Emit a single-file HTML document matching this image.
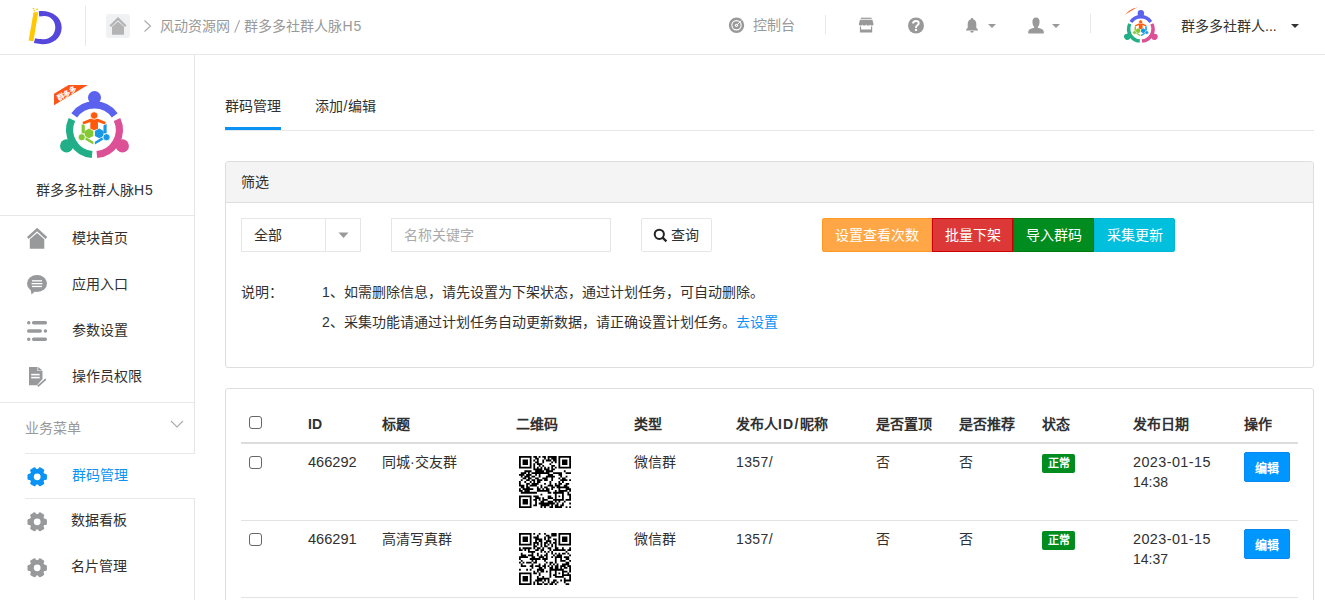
<!DOCTYPE html>
<html lang="zh-CN"><head><meta charset="utf-8">
<style>
*{box-sizing:border-box;margin:0;padding:0}
html,body{width:1325px;height:600px;overflow:hidden;background:#fff}
body{font-family:"Liberation Sans",sans-serif;font-size:14px;color:#303030;position:relative}
.a{position:absolute;white-space:nowrap}
.t{line-height:14px}
.hl{position:absolute;background:#e8e8e8}
svg{display:block}
</style></head><body>

<!-- HEADER -->
<div class="a" style="left:0;top:0;width:1325px;height:54px;background:#fff"></div>
<div class="hl" style="left:0;top:54px;width:1325px;height:1px;background:#e6e7eb"></div>
<svg class="a" style="left:20px;top:4px" width="50" height="46" viewBox="20 4 50 46">
  <path d="M33.6 12.2 L38.2 12.2 L33.4 41.2 L28.6 40.6 Z" fill="#ffc800"/>
  <circle cx="33.5" cy="8.6" r="0.9" fill="#ffc800"/><circle cx="37" cy="9.3" r="0.9" fill="#ffc800"/><circle cx="34.3" cy="10.8" r="0.8" fill="#ffc800"/>
  <path d="M38.8 11.2 C50.5 9.8 61.7 16.5 61.7 27.5 C61.7 38.5 52 44.6 42 44.3 L33.9 43 L35.1 38.3 C38 39 41.5 39.3 44 39.2 C50.5 39 55.3 34 55.3 27.5 C55.3 20.5 50.2 15.9 44.5 15.9 C42.5 15.9 40.7 16.1 39.2 16.4 Z" fill="#5546dc"/>
</svg>
<div class="hl" style="left:85px;top:6px;width:1px;height:40px"></div>
<div class="a" style="left:106px;top:14px;width:24px;height:24px;background:#f0f1f3;border-radius:3px"></div>
<svg class="a" style="left:106px;top:14px" width="24" height="24" viewBox="0 0 24 24">
  <path d="M4.2 12.2 L12 4.6 L19.8 12.2" fill="none" stroke="#b4b4b4" stroke-width="2.2"/>
  <path d="M6 12.8 L12 7.4 L18 12.8 V20.7 H6 Z" fill="#b4b4b4"/>
</svg>
<svg class="a" style="left:140px;top:16px" width="16" height="20" viewBox="0 0 16 20">
  <path d="M4.5 4.5 L10.5 10 L4.5 15.5" fill="none" stroke="#aaa" stroke-width="1.1"/>
</svg>
<div class="a t" style="left:160px;top:19px;color:#999">风动资源网</div>
<svg class="a" style="left:233px;top:19px" width="8" height="15" viewBox="0 0 8 15"><path d="M6.6 1.2 L1.6 13.6" stroke="#a5a5a5" stroke-width="1.1"/></svg>
<div class="a t" style="left:244px;top:19px;color:#999">群多多社群人脉<span style="letter-spacing:1px;margin-left:0.5px">H5</span></div>

<svg class="a" style="left:728px;top:17px" width="18" height="18" viewBox="0 0 18 18">
  <circle cx="8.5" cy="8.3" r="6.45" fill="none" stroke="#999" stroke-width="2.5"/>
  <circle cx="8.5" cy="8.3" r="4.05" fill="#999"/>
  <circle cx="8.5" cy="8.3" r="1.6" fill="#fff"/>
  <circle cx="8.5" cy="8.3" r="0.6" fill="#999"/>
  <path d="M9.3 7.5 L13.2 3.6" stroke="#fff" stroke-width="1"/>
</svg>
<div class="a t" style="left:753px;top:18px;color:#999">控制台</div>
<div class="hl" style="left:825px;top:15px;width:1px;height:19px"></div>

<svg class="a" style="left:858px;top:17px" width="16" height="16" viewBox="0 0 16 16">
  <rect x="2.8" y="0.7" width="10.8" height="1.2" fill="#999"/>
  <path d="M2 2.8 H14.4 L15.6 7.2 Q15.6 8.6 14 8.6 Q12.4 8.6 12.2 7.4 Q11.9 8.6 10.3 8.6 Q8.6 8.6 8.2 7.4 Q7.8 8.6 6.1 8.6 Q4.5 8.6 4.2 7.4 Q4 8.6 2.4 8.6 Q0.8 8.6 0.8 7.2 Z" fill="#999"/>
  <path d="M1.9 9.6 V15.6 H14.2 V9.6 H13 V12.6 H3.1 V9.6 Z" fill="#999"/>
</svg>
<svg class="a" style="left:908px;top:17px" width="16" height="17" viewBox="0 0 16 17">
  <circle cx="8" cy="8.5" r="8" fill="#999"/>
  <path d="M5.1 6.5 Q5.1 3.9 8 3.9 Q10.7 3.9 10.7 6.2 Q10.7 7.6 9.1 8.5 Q8 9.2 8 10.9" fill="none" stroke="#fff" stroke-width="2"/>
  <rect x="6.9" y="11.9" width="2.2" height="2" fill="#fff"/>
</svg>
<svg class="a" style="left:965px;top:17px" width="14" height="17" viewBox="0 0 14 17">
  <path d="M7 1 Q8.2 1 8.3 2.2 Q11.3 3.2 11.3 7.2 V10.8 L13 12.8 V13.5 H1 V12.8 L2.7 10.8 V7.2 Q2.7 3.2 5.7 2.2 Q5.8 1 7 1 Z" fill="#999"/>
  <path d="M5.2 14 H8.8 Q8.6 15.8 7 15.8 Q5.4 15.8 5.2 14 Z" fill="#999"/>
</svg>
<svg class="a" style="left:987px;top:23px" width="10" height="6" viewBox="0 0 10 6"><path d="M1 1 H9 L5 5 Z" fill="#999"/></svg>
<svg class="a" style="left:1028px;top:17px" width="16" height="17" viewBox="0 0 16 17">
  <path d="M8 0.5 Q11.6 0.5 11.6 5 Q11.6 8.2 9.8 10 V10.8 Q15.8 11.8 15.8 15 V16.5 H0.2 V15 Q0.2 11.8 6.2 10.8 V10 Q4.4 8.2 4.4 5 Q4.4 0.5 8 0.5 Z" fill="#999"/>
</svg>
<svg class="a" style="left:1051px;top:23px" width="10" height="6" viewBox="0 0 10 6"><path d="M1 1 H9 L5 5 Z" fill="#999"/></svg>
<div class="hl" style="left:1090px;top:14px;width:1px;height:19px"></div>

<div class="a" style="left:1121px;top:7px;width:40px;height:40px;border-radius:50%;overflow:hidden">
<svg width="40" height="40" viewBox="0 0 80 80"><use href="#logo"/></svg>
</div>
<div class="a t" style="left:1181px;top:19px;color:#333">群多多社群人...</div>
<svg class="a" style="left:1290px;top:23px" width="10" height="6" viewBox="0 0 10 6"><path d="M1 1 H9 L5 5 Z" fill="#333"/></svg>

<!-- SIDEBAR -->
<div class="hl" style="left:194px;top:55px;width:1px;height:399px;background:#e6e6e6"></div>
<div class="hl" style="left:194px;top:498px;width:1px;height:102px;background:#e6e6e6"></div>
<svg class="a" style="left:54.3px;top:85.4px" width="81.6" height="81.6" viewBox="0 0 80 80">
 <defs>
  <g id="logo">
<path d="M19.85 29.79 A24.35 24.35 0 0 1 59.55 29.79" fill="none" stroke="#5a62ee" stroke-width="7"/>
<path d="M61.84 33.76 A24.35 24.35 0 0 1 41.99 68.14" fill="none" stroke="#dc5096" stroke-width="7"/>
<path d="M37.41 68.14 A24.35 24.35 0 0 1 17.56 33.76" fill="none" stroke="#22ae86" stroke-width="7"/>
<path d="M33.74 18.08 Q36.36 14.59 35.25 12.21 L44.15 12.21 Q43.04 14.59 45.66 18.08 Z" fill="#5a62ee"/>
<circle cx="39.70" cy="12.30" r="6.4" fill="#5a62ee"/>
<path d="M65.04 51.65 Q66.75 55.66 69.37 55.89 L64.92 63.60 Q63.41 61.45 59.08 61.97 Z" fill="#dc5096"/>
<circle cx="67.07" cy="59.70" r="6.4" fill="#dc5096"/>
<path d="M20.32 61.97 Q15.99 61.45 14.48 63.60 L10.03 55.89 Q12.65 55.66 14.36 51.65 Z" fill="#22ae86"/>
<circle cx="12.33" cy="59.70" r="6.4" fill="#22ae86"/>
<path d="M35.6 33.2 L43.1 33.2 L50.9 36.3 L49.8 38.8 L43.1 36.2 L43.1 42.8 L39.35 44.4 L35.6 42.8 L35.6 36.2 L28.9 38.8 L27.8 36.3 Z" fill="#ff5a0a"/>
<circle cx="39.35" cy="29.9" r="3.7" fill="#ff5a0a" stroke="#fff" stroke-width="0.8"/>
<path d="M27.1 38.3 L30.2 39.6 L30.2 47.5 L27.1 47.5 Z" fill="#84c934"/>
<path d="M34.3 42.7 L38.6 45.1 L38.6 49.9 L34.3 52.3 L30.1 49.9 L30.1 45.1 Z" fill="#84c934"/>
<path d="M31.5 51.3 L38.6 55.6 L38.6 58.4 L30.3 53.4 Z" fill="#84c934"/>
<circle cx="27.2" cy="51.2" r="3.5" fill="#84c934" stroke="#fff" stroke-width="0.8"/>
<path d="M51.6 38.3 L48.5 39.6 L48.5 47.5 L51.6 47.5 Z" fill="#1a98e4"/>
<path d="M44.4 42.7 L40.1 45.1 L40.1 49.9 L44.4 52.3 L48.6 49.9 L48.6 45.1 Z" fill="#1a98e4"/>
<path d="M47.2 51.3 L40.1 55.6 L40.1 58.4 L48.4 53.4 Z" fill="#1a98e4"/>
<circle cx="51.5" cy="51.2" r="3.5" fill="#1a98e4" stroke="#fff" stroke-width="0.8"/>
<path d="M0 8.6 L14.3 0 L33.2 0 L0 19.9 Z" fill="#ff5514"/>
<text x="0" y="0" transform="translate(13.5 10.6) rotate(-31)" font-size="7.2" font-weight="bold" fill="#fff" text-anchor="middle" font-family="Liberation Sans">群多多</text>
  </g>
 </defs>
 <use href="#logo"/>
</svg>
<div class="a t" style="left:36px;top:183px;color:#333">群多多社群人脉<span style="letter-spacing:0.8px">H5</span></div>
<div class="hl" style="left:0;top:215px;width:194px;height:1px"></div>

<!-- menu icons -->
<svg class="a" style="left:27px;top:228px" width="21" height="22" viewBox="0 0 21 22">
  <path d="M0.8 10 L10.1 1.6 L19.4 10" fill="none" stroke="#98999b" stroke-width="2.6"/>
  <path d="M2.8 11.2 L10.1 5 L17.3 11.2 V20.7 H2.8 Z" fill="#98999b"/>
</svg>
<div class="a t" style="left:72px;top:231px">模块首页</div>
<svg class="a" style="left:26px;top:274px" width="22" height="22" viewBox="0 0 22 22">
  <ellipse cx="11" cy="9.5" rx="10" ry="8.5" fill="#98999b"/>
  <path d="M4.5 15 L5.5 20.5 L10 16.5 Z" fill="#98999b"/>
  <rect x="6" y="6.2" width="10" height="1.3" fill="#fff"/><rect x="5.6" y="9" width="10.8" height="1.3" fill="#fff"/><rect x="6" y="11.8" width="10" height="1.3" fill="#fff"/>
</svg>
<div class="a t" style="left:72px;top:277px">应用入口</div>
<svg class="a" style="left:26px;top:319px" width="22" height="22" viewBox="0 0 22 22">
  <g fill="none" stroke="#98999b" stroke-width="3.4" stroke-linecap="round">
   <path d="M2.7 3.7 h0.1 M7.6 3.7 H19.4 M2.7 12 H14.3 M19.4 12 h0.1 M2.7 20.2 h0.1 M7.6 20.2 H19.4"/>
  </g>
</svg>
<div class="a t" style="left:72px;top:323px">参数设置</div>
<svg class="a" style="left:26px;top:365px" width="22" height="23" viewBox="0 0 22 23">
  <path d="M3 2 H11.5 V6 H16.5 V14 L11 20.2 H3 Z" fill="#98999b"/>
  <path d="M12.2 2 L16.5 5.5 H12.2 Z" fill="#98999b"/>
  <rect x="5.2" y="8.8" width="8.5" height="1.6" fill="#fff"/><rect x="5.2" y="11.8" width="8.5" height="1.6" fill="#fff"/>
  <path d="M11.8 21.4 L19.8 14.2" stroke="#98999b" stroke-width="1.8"/>
</svg>
<div class="a t" style="left:72px;top:369px">操作员权限</div>

<div class="hl" style="left:0;top:402px;width:194px;height:1px"></div>
<div class="a t" style="left:25px;top:421px;color:#999">业务菜单</div>
<svg class="a" style="left:170px;top:419px" width="14" height="10" viewBox="0 0 14 10"><path d="M1 2 L7 8 L13 2" fill="none" stroke="#aaa" stroke-width="1.1"/></svg>
<div class="hl" style="left:25px;top:453px;width:169px;height:1px"></div>

<svg width="0" height="0" style="position:absolute">
 <defs>
  <path id="gear" d="M10 0.6 L14.6 0.6 L16.8 4.6 L20.6 4.6 L21.8 9.6 L19.6 12.8 L21.8 16 L19.2 20 L15.4 19.6 L13 23.4 L8.4 23.4 L6.2 19.6 L2.4 19.6 L0.2 15.2 L2.4 12 L0.2 8.4 L3 4.4 L6.8 4.6 Z"/>
 </defs>
</svg>
<svg class="a" style="left:27px;top:467px" width="21" height="21" viewBox="0 0 21 21" id="g1">
  <g transform="translate(10.2 9.8)" fill="#0a92f5"><circle r="7.8"/><rect x="-3.1" y="-9.7" width="6.2" height="6" rx="1.5" transform="rotate(30)"/><rect x="-3.1" y="-9.7" width="6.2" height="6" rx="1.5" transform="rotate(90)"/><rect x="-3.1" y="-9.7" width="6.2" height="6" rx="1.5" transform="rotate(150)"/><rect x="-3.1" y="-9.7" width="6.2" height="6" rx="1.5" transform="rotate(210)"/><rect x="-3.1" y="-9.7" width="6.2" height="6" rx="1.5" transform="rotate(270)"/><rect x="-3.1" y="-9.7" width="6.2" height="6" rx="1.5" transform="rotate(330)"/></g>
  <circle cx="10.2" cy="9.8" r="3.4" fill="#fff"/>
</svg>
<div class="a t" style="left:72px;top:468px;color:#0a92f5">群码管理</div>
<div class="hl" style="left:25px;top:498px;width:169px;height:1px"></div>
<svg class="a" style="left:27px;top:512px" width="21" height="21" viewBox="0 0 21 21">
  <g transform="translate(10.2 9.8)" fill="#98999b"><circle r="7.8"/><rect x="-3.1" y="-9.7" width="6.2" height="6" rx="1.5" transform="rotate(30)"/><rect x="-3.1" y="-9.7" width="6.2" height="6" rx="1.5" transform="rotate(90)"/><rect x="-3.1" y="-9.7" width="6.2" height="6" rx="1.5" transform="rotate(150)"/><rect x="-3.1" y="-9.7" width="6.2" height="6" rx="1.5" transform="rotate(210)"/><rect x="-3.1" y="-9.7" width="6.2" height="6" rx="1.5" transform="rotate(270)"/><rect x="-3.1" y="-9.7" width="6.2" height="6" rx="1.5" transform="rotate(330)"/></g>
  <circle cx="10.2" cy="9.8" r="3.4" fill="#fff"/>
</svg>
<div class="a t" style="left:71px;top:513px">数据看板</div>
<svg class="a" style="left:27px;top:558px" width="21" height="21" viewBox="0 0 21 21">
  <g transform="translate(10.2 9.8)" fill="#98999b"><circle r="7.8"/><rect x="-3.1" y="-9.7" width="6.2" height="6" rx="1.5" transform="rotate(30)"/><rect x="-3.1" y="-9.7" width="6.2" height="6" rx="1.5" transform="rotate(90)"/><rect x="-3.1" y="-9.7" width="6.2" height="6" rx="1.5" transform="rotate(150)"/><rect x="-3.1" y="-9.7" width="6.2" height="6" rx="1.5" transform="rotate(210)"/><rect x="-3.1" y="-9.7" width="6.2" height="6" rx="1.5" transform="rotate(270)"/><rect x="-3.1" y="-9.7" width="6.2" height="6" rx="1.5" transform="rotate(330)"/></g>
  <circle cx="10.2" cy="9.8" r="3.4" fill="#fff"/>
</svg>
<div class="a t" style="left:71px;top:559px">名片管理</div>

<!-- MAIN -->
<div class="a t" style="left:225px;top:99px">群码管理</div>
<div class="a t" style="left:315px;top:99px">添加<span style="letter-spacing:1px;margin-left:0.5px">/</span>编辑</div>
<div class="hl" style="left:225px;top:130px;width:1089px;height:1px;background:#e6e7eb"></div>
<div class="a" style="left:225px;top:127px;width:56px;height:3px;background:#0a92f5"></div>

<!-- panel 1 -->
<div class="a" style="left:225px;top:161px;width:1089px;height:207px;border:1px solid #dedede;border-radius:3px;overflow:hidden">
  <div style="height:41px;background:#f4f4f4;border-bottom:1px solid #dedede"></div>
</div>
<div class="a t" style="left:241px;top:175px">筛选</div>

<div class="a" style="left:241px;top:218px;width:120px;height:34px;border:1px solid #e6e6e6"></div>
<div class="a" style="left:325px;top:218px;width:1px;height:34px;background:#e6e6e6"></div>
<div class="a t" style="left:254px;top:228px">全部</div>
<svg class="a" style="left:338px;top:232px" width="11" height="7" viewBox="0 0 11 7"><path d="M0.5 0.5 H10.5 L5.5 6 Z" fill="#999"/></svg>

<div class="a" style="left:391px;top:218px;width:220px;height:34px;border:1px solid #e6e6e6"></div>
<div class="a t" style="left:404px;top:228px;color:#aaa">名称关键字</div>

<div class="a" style="left:641px;top:218px;width:71px;height:34px;border:1px solid #e6e6e6;border-radius:2px"></div>
<svg class="a" style="left:653px;top:228px" width="15" height="15" viewBox="0 0 15 15">
  <circle cx="6.3" cy="6.3" r="4.6" fill="none" stroke="#222" stroke-width="2"/>
  <path d="M9.6 9.6 L13.4 13.4" stroke="#222" stroke-width="2.2"/>
</svg>
<div class="a t" style="left:671px;top:228px">查询</div>

<div class="a" style="left:822px;top:218px;width:110px;height:34px;background:#ffa646;border:1px solid #ff9a22;border-radius:2px 0 0 2px"></div>
<div class="a t" style="left:835px;top:228px;color:#fff">设置查看次数</div>
<div class="a" style="left:932px;top:218px;width:81px;height:34px;background:#dd3838;border:1px solid #cc0000"></div>
<div class="a t" style="left:945px;top:228px;color:#fff">批量下架</div>
<div class="a" style="left:1013px;top:218px;width:81px;height:34px;background:#008c1e;border:1px solid #007a10"></div>
<div class="a t" style="left:1026px;top:228px;color:#fff">导入群码</div>
<div class="a" style="left:1094px;top:218px;width:81px;height:34px;background:#00c0de;border:1px solid #00b6d6;border-radius:0 2px 2px 0"></div>
<div class="a t" style="left:1107px;top:228px;color:#fff">采集更新</div>

<div class="a t" style="left:241px;top:285px">说明：</div>
<div class="a t" style="left:322px;top:285px">1、如需删除信息，请先设置为下架状态，通过计划任务，可自动删除。</div>
<div class="a t" style="left:322px;top:315px">2、采集功能请通过计划任务自动更新数据，请正确设置计划任务。<span style="color:#0a92f5">去设置</span></div>

<!-- panel 2 -->
<div class="a" style="left:225px;top:388px;width:1089px;height:260px;border:1px solid #dedede;border-radius:3px"></div>
<div class="hl" style="left:241px;top:442px;width:1057px;height:2px;background:#dcdcdc"></div>
<div class="hl" style="left:241px;top:520px;width:1057px;height:1px;background:#e3e3e3"></div>
<div class="hl" style="left:241px;top:597px;width:1057px;height:1px;background:#e3e3e3"></div>

<div class="a" style="left:249px;top:416px;width:13px;height:13px;border:1px solid #666;border-radius:3px"></div>
<div class="a t" style="left:308px;top:417px;font-weight:bold">ID</div>
<div class="a t" style="left:382px;top:417px;font-weight:bold">标题</div>
<div class="a t" style="left:516px;top:417px;font-weight:bold">二维码</div>
<div class="a t" style="left:634px;top:417px;font-weight:bold">类型</div>
<div class="a t" style="left:736px;top:417px;font-weight:bold">发布人<span style="letter-spacing:1.2px">ID/</span>昵称</div>
<div class="a t" style="left:876px;top:417px;font-weight:bold">是否置顶</div>
<div class="a t" style="left:959px;top:417px;font-weight:bold">是否推荐</div>
<div class="a t" style="left:1042px;top:417px;font-weight:bold">状态</div>
<div class="a t" style="left:1133px;top:417px;font-weight:bold">发布日期</div>
<div class="a t" style="left:1244px;top:417px;font-weight:bold">操作</div>


<div class="a" style="left:249px;top:456px;width:13px;height:13px;border:1px solid #666;border-radius:3px"></div>
<div class="a t" style="left:308px;top:455px;font-size:14.6px;line-height:14px">466292</div>
<div class="a t" style="left:382px;top:455px">同城·交友群</div>
<svg class="a" style="left:519px;top:456px" width="52" height="52" viewBox="0 0 29 29"><use href="#qr"/></svg>
<div class="a t" style="left:634px;top:455px">微信群</div>
<div class="a t" style="left:736px;top:455px;letter-spacing:0.4px">1357/</div>
<div class="a t" style="left:876px;top:455px">否</div>
<div class="a t" style="left:959px;top:455px">否</div>
<div class="a" style="left:1042px;top:454px;width:33px;height:19px;background:#008c1e;border-radius:2px"></div>
<div class="a" style="left:1042px;top:457.5px;width:33px;text-align:center;color:#fff;font-size:11px;line-height:11px;font-weight:bold">正常</div>
<div class="a t" style="left:1133px;top:455px;font-size:14.4px;letter-spacing:0.42px">2023-01-15</div>
<div class="a t" style="left:1133px;top:475px">14:38</div>
<div class="a" style="left:1244px;top:452px;width:46px;height:30px;background:#0096ff;border:1px solid #0888f0;border-radius:2px"></div>
<div class="a" style="left:1244px;top:463px;width:46px;text-align:center;color:#fff;font-size:12px;line-height:12px;font-weight:bold">编辑</div>

<div class="a" style="left:249px;top:533px;width:13px;height:13px;border:1px solid #666;border-radius:3px"></div>
<div class="a t" style="left:308px;top:532px;font-size:14.6px;line-height:14px">466291</div>
<div class="a t" style="left:382px;top:532px">高清写真群</div>
<svg class="a" style="left:519px;top:533px" width="52" height="52" viewBox="0 0 29 29"><use href="#qr2"/></svg>
<div class="a t" style="left:634px;top:532px">微信群</div>
<div class="a t" style="left:736px;top:532px;letter-spacing:0.4px">1357/</div>
<div class="a t" style="left:876px;top:532px">否</div>
<div class="a t" style="left:959px;top:532px">否</div>
<div class="a" style="left:1042px;top:531px;width:33px;height:19px;background:#008c1e;border-radius:2px"></div>
<div class="a" style="left:1042px;top:534.5px;width:33px;text-align:center;color:#fff;font-size:11px;line-height:11px;font-weight:bold">正常</div>
<div class="a t" style="left:1133px;top:532px;font-size:14.4px;letter-spacing:0.42px">2023-01-15</div>
<div class="a t" style="left:1133px;top:552px">14:37</div>
<div class="a" style="left:1244px;top:529px;width:46px;height:30px;background:#0096ff;border:1px solid #0888f0;border-radius:2px"></div>
<div class="a" style="left:1244px;top:540px;width:46px;text-align:center;color:#fff;font-size:12px;line-height:12px;font-weight:bold">编辑</div>


<svg width="0" height="0" style="position:absolute"><defs><path id="qr2" d="M0 0h7v1h-7zM8 0h1v1h-1zM11 0h1v1h-1zM14 0h1v1h-1zM18 0h3v1h-3zM22 0h7v1h-7zM0 1h1v1h-1zM6 1h1v1h-1zM10 1h1v1h-1zM15 1h2v1h-2zM18 1h3v1h-3zM22 1h1v1h-1zM28 1h1v1h-1zM0 2h1v1h-1zM2 2h3v1h-3zM6 2h1v1h-1zM8 2h3v1h-3zM14 2h1v1h-1zM16 2h2v1h-2zM22 2h1v1h-1zM24 2h3v1h-3zM28 2h1v1h-1zM0 3h1v1h-1zM2 3h3v1h-3zM6 3h1v1h-1zM9 3h4v1h-4zM14 3h1v1h-1zM16 3h1v1h-1zM19 3h2v1h-2zM22 3h1v1h-1zM24 3h3v1h-3zM28 3h1v1h-1zM0 4h1v1h-1zM2 4h3v1h-3zM6 4h1v1h-1zM9 4h1v1h-1zM11 4h2v1h-2zM15 4h3v1h-3zM20 4h1v1h-1zM22 4h1v1h-1zM24 4h3v1h-3zM28 4h1v1h-1zM0 5h1v1h-1zM6 5h1v1h-1zM8 5h3v1h-3zM12 5h1v1h-1zM14 5h2v1h-2zM17 5h1v1h-1zM19 5h2v1h-2zM22 5h1v1h-1zM28 5h1v1h-1zM0 6h7v1h-7zM8 6h1v1h-1zM10 6h1v1h-1zM12 6h1v1h-1zM14 6h1v1h-1zM16 6h1v1h-1zM18 6h1v1h-1zM20 6h1v1h-1zM22 6h7v1h-7zM8 7h2v1h-2zM12 7h1v1h-1zM14 7h2v1h-2zM18 7h1v1h-1zM20 7h1v1h-1zM0 8h1v1h-1zM2 8h5v1h-5zM8 8h1v1h-1zM10 8h2v1h-2zM13 8h1v1h-1zM16 8h2v1h-2zM20 8h2v1h-2zM24 8h1v1h-1zM28 8h1v1h-1zM0 9h2v1h-2zM3 9h1v1h-1zM5 9h1v1h-1zM9 9h2v1h-2zM12 9h2v1h-2zM17 9h1v1h-1zM19 9h7v1h-7zM27 9h2v1h-2zM5 10h4v1h-4zM12 10h1v1h-1zM14 10h1v1h-1zM16 10h1v1h-1zM18 10h1v1h-1zM26 10h1v1h-1zM1 11h1v1h-1zM7 11h1v1h-1zM10 11h1v1h-1zM15 11h1v1h-1zM18 11h1v1h-1zM20 11h1v1h-1zM22 11h1v1h-1zM24 11h2v1h-2zM27 11h1v1h-1zM1 12h3v1h-3zM5 12h3v1h-3zM10 12h1v1h-1zM12 12h1v1h-1zM14 12h2v1h-2zM19 12h1v1h-1zM21 12h3v1h-3zM28 12h1v1h-1zM0 13h5v1h-5zM7 13h2v1h-2zM11 13h3v1h-3zM15 13h1v1h-1zM18 13h1v1h-1zM20 13h4v1h-4zM25 13h3v1h-3zM0 14h1v1h-1zM6 14h6v1h-6zM13 14h3v1h-3zM20 14h1v1h-1zM23 14h1v1h-1zM26 14h2v1h-2zM1 15h1v1h-1zM7 15h1v1h-1zM9 15h1v1h-1zM14 15h1v1h-1zM20 15h1v1h-1zM23 15h3v1h-3zM28 15h1v1h-1zM0 16h1v1h-1zM2 16h1v1h-1zM4 16h3v1h-3zM8 16h2v1h-2zM15 16h1v1h-1zM17 16h2v1h-2zM20 16h1v1h-1zM26 16h2v1h-2zM1 17h1v1h-1zM7 17h1v1h-1zM11 17h1v1h-1zM14 17h1v1h-1zM17 17h1v1h-1zM19 17h1v1h-1zM21 17h1v1h-1zM24 17h4v1h-4zM1 18h3v1h-3zM6 18h2v1h-2zM9 18h3v1h-3zM13 18h2v1h-2zM16 18h1v1h-1zM18 18h1v1h-1zM20 18h2v1h-2zM23 18h3v1h-3zM27 18h2v1h-2zM7 19h1v1h-1zM11 19h2v1h-2zM14 19h1v1h-1zM17 19h2v1h-2zM20 19h2v1h-2zM23 19h1v1h-1zM25 19h2v1h-2zM28 19h1v1h-1zM0 20h1v1h-1zM4 20h1v1h-1zM6 20h1v1h-1zM10 20h4v1h-4zM17 20h8v1h-8zM28 20h1v1h-1zM8 21h1v1h-1zM10 21h1v1h-1zM12 21h2v1h-2zM15 21h1v1h-1zM17 21h1v1h-1zM20 21h1v1h-1zM24 21h3v1h-3zM28 21h1v1h-1zM0 22h7v1h-7zM8 22h2v1h-2zM11 22h1v1h-1zM17 22h1v1h-1zM20 22h1v1h-1zM22 22h1v1h-1zM24 22h1v1h-1zM27 22h1v1h-1zM0 23h1v1h-1zM6 23h1v1h-1zM11 23h1v1h-1zM17 23h1v1h-1zM19 23h2v1h-2zM24 23h5v1h-5zM0 24h1v1h-1zM2 24h3v1h-3zM6 24h1v1h-1zM10 24h1v1h-1zM13 24h1v1h-1zM17 24h1v1h-1zM20 24h5v1h-5zM28 24h1v1h-1zM0 25h1v1h-1zM2 25h3v1h-3zM6 25h1v1h-1zM10 25h7v1h-7zM25 25h1v1h-1zM28 25h1v1h-1zM0 26h1v1h-1zM2 26h3v1h-3zM6 26h1v1h-1zM9 26h4v1h-4zM14 26h1v1h-1zM16 26h1v1h-1zM19 26h2v1h-2zM23 26h1v1h-1zM25 26h4v1h-4zM0 27h1v1h-1zM6 27h1v1h-1zM8 27h1v1h-1zM10 27h1v1h-1zM13 27h1v1h-1zM16 27h1v1h-1zM18 27h2v1h-2zM21 27h1v1h-1zM25 27h1v1h-1zM0 28h7v1h-7zM8 28h1v1h-1zM10 28h3v1h-3zM14 28h2v1h-2zM17 28h2v1h-2zM20 28h1v1h-1zM26 28h2v1h-2z"/><path id="qr" d="M0 0h7v1h-7zM8 0h2v1h-2zM11 0h1v1h-1zM13 0h2v1h-2zM16 0h5v1h-5zM22 0h7v1h-7zM0 1h1v1h-1zM6 1h1v1h-1zM9 1h2v1h-2zM14 1h1v1h-1zM16 1h1v1h-1zM18 1h3v1h-3zM22 1h1v1h-1zM28 1h1v1h-1zM0 2h1v1h-1zM2 2h3v1h-3zM6 2h1v1h-1zM8 2h1v1h-1zM10 2h1v1h-1zM13 2h1v1h-1zM15 2h3v1h-3zM19 2h2v1h-2zM22 2h1v1h-1zM24 2h3v1h-3zM28 2h1v1h-1zM0 3h1v1h-1zM2 3h3v1h-3zM6 3h1v1h-1zM9 3h2v1h-2zM13 3h1v1h-1zM18 3h1v1h-1zM20 3h1v1h-1zM22 3h1v1h-1zM24 3h3v1h-3zM28 3h1v1h-1zM0 4h1v1h-1zM2 4h3v1h-3zM6 4h1v1h-1zM8 4h1v1h-1zM10 4h3v1h-3zM17 4h1v1h-1zM22 4h1v1h-1zM24 4h3v1h-3zM28 4h1v1h-1zM0 5h1v1h-1zM6 5h1v1h-1zM8 5h1v1h-1zM11 5h1v1h-1zM13 5h1v1h-1zM18 5h2v1h-2zM22 5h1v1h-1zM28 5h1v1h-1zM0 6h7v1h-7zM8 6h1v1h-1zM10 6h1v1h-1zM12 6h1v1h-1zM14 6h1v1h-1zM16 6h1v1h-1zM18 6h1v1h-1zM20 6h1v1h-1zM22 6h7v1h-7zM8 7h5v1h-5zM14 7h3v1h-3zM18 7h2v1h-2zM3 8h4v1h-4zM9 8h5v1h-5zM15 8h4v1h-4zM25 8h1v1h-1zM1 9h3v1h-3zM5 9h1v1h-1zM7 9h10v1h-10zM19 9h5v1h-5zM26 9h3v1h-3zM0 10h3v1h-3zM4 10h3v1h-3zM9 10h1v1h-1zM11 10h1v1h-1zM16 10h3v1h-3zM22 10h2v1h-2zM1 11h1v1h-1zM3 11h3v1h-3zM7 11h2v1h-2zM11 11h1v1h-1zM15 11h5v1h-5zM23 11h1v1h-1zM26 11h1v1h-1zM2 12h2v1h-2zM5 12h2v1h-2zM9 12h2v1h-2zM13 12h3v1h-3zM18 12h1v1h-1zM22 12h1v1h-1zM24 12h2v1h-2zM1 13h1v1h-1zM4 13h2v1h-2zM7 13h2v1h-2zM10 13h3v1h-3zM14 13h2v1h-2zM18 13h1v1h-1zM23 13h4v1h-4zM28 13h1v1h-1zM0 14h1v1h-1zM3 14h1v1h-1zM6 14h1v1h-1zM8 14h1v1h-1zM10 14h2v1h-2zM17 14h1v1h-1zM22 14h1v1h-1zM24 14h1v1h-1zM0 15h1v1h-1zM4 15h2v1h-2zM7 15h4v1h-4zM14 15h1v1h-1zM17 15h1v1h-1zM20 15h1v1h-1zM22 15h2v1h-2zM26 15h2v1h-2zM0 16h3v1h-3zM4 16h1v1h-1zM6 16h4v1h-4zM12 16h1v1h-1zM16 16h3v1h-3zM20 16h3v1h-3zM25 16h2v1h-2zM1 17h2v1h-2zM4 17h2v1h-2zM10 17h1v1h-1zM12 17h1v1h-1zM14 17h2v1h-2zM18 17h2v1h-2zM21 17h7v1h-7zM0 18h1v1h-1zM2 18h6v1h-6zM10 18h2v1h-2zM13 18h1v1h-1zM15 18h2v1h-2zM18 18h1v1h-1zM22 18h1v1h-1zM26 18h3v1h-3zM0 19h2v1h-2zM3 19h3v1h-3zM10 19h7v1h-7zM20 19h1v1h-1zM22 19h5v1h-5zM28 19h1v1h-1zM1 20h9v1h-9zM16 20h2v1h-2zM19 20h6v1h-6zM27 20h1v1h-1zM12 21h1v1h-1zM20 21h1v1h-1zM24 21h1v1h-1zM27 21h2v1h-2zM0 22h7v1h-7zM8 22h3v1h-3zM16 22h2v1h-2zM20 22h1v1h-1zM22 22h1v1h-1zM24 22h1v1h-1zM28 22h1v1h-1zM0 23h1v1h-1zM6 23h1v1h-1zM9 23h3v1h-3zM13 23h1v1h-1zM16 23h3v1h-3zM20 23h1v1h-1zM24 23h1v1h-1zM28 23h1v1h-1zM0 24h1v1h-1zM2 24h3v1h-3zM6 24h1v1h-1zM8 24h2v1h-2zM11 24h1v1h-1zM13 24h3v1h-3zM19 24h6v1h-6zM26 24h3v1h-3zM0 25h1v1h-1zM2 25h3v1h-3zM6 25h1v1h-1zM9 25h1v1h-1zM12 25h2v1h-2zM16 25h3v1h-3zM20 25h1v1h-1zM22 25h1v1h-1zM25 25h1v1h-1zM0 26h1v1h-1zM2 26h3v1h-3zM6 26h1v1h-1zM9 26h1v1h-1zM11 26h9v1h-9zM21 26h1v1h-1zM24 26h1v1h-1zM28 26h1v1h-1zM0 27h1v1h-1zM6 27h1v1h-1zM8 27h2v1h-2zM12 27h5v1h-5zM18 27h1v1h-1zM20 27h2v1h-2zM23 27h2v1h-2zM0 28h7v1h-7zM12 28h1v1h-1zM14 28h1v1h-1zM17 28h2v1h-2zM20 28h4v1h-4zM26 28h1v1h-1zM28 28h1v1h-1z"/></defs></svg>
</body></html>
